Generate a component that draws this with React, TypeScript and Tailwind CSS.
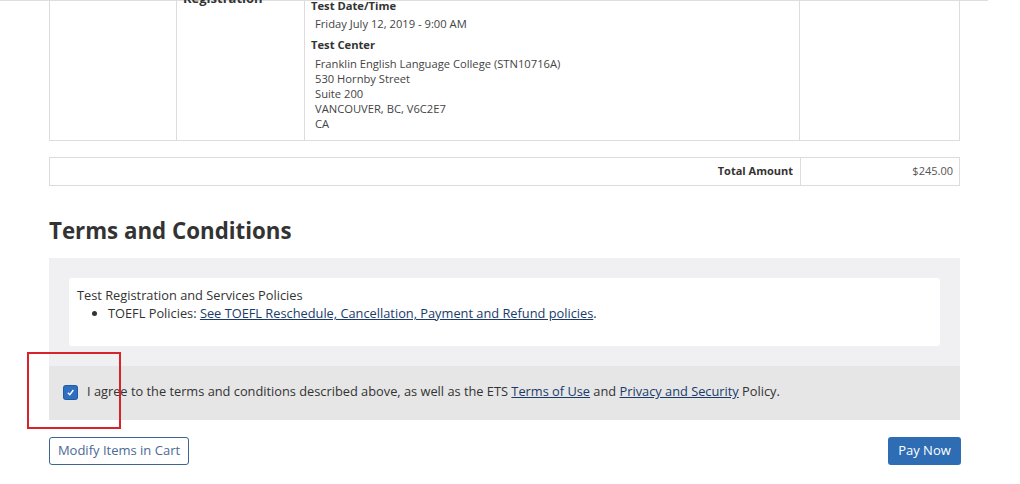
import React from "react";

export default function App() {
  return (
    <div
      className="relative h-[484px] w-[1020px] overflow-hidden bg-white text-[#333]"
      style={{ fontFamily: '"Open Sans", Arial, sans-serif' }}
    >
      <div className="h-px w-[988px] bg-[#dedede]" />
      <div className="-mt-[38px] pl-[49px] w-[960px]">
        {/* item row */}
        <div className="flex border border-[#dcdcdc] border-t-0">
          <div className="w-[127px] border-r border-[#dcdcdc]" />
          <div className="w-[128px] border-r border-[#dcdcdc] pl-[6px] pt-[8px] text-[13px] font-bold leading-[18px] text-[#333]">
            <div>TOEFL iBT Test</div>
            <div>Registration</div>
          </div>
          <div className="w-[495px] border-r border-[#dcdcdc] pl-[6px] pt-[35px] pb-[9px] text-[11.2px]">
            <div className="font-bold leading-[16px]">Test Date/Time</div>
            <div className="mt-[2px] pl-[4px] leading-[16px] text-[#444]">Friday July 12, 2019 - 9:00 AM</div>
            <div className="mt-[5px] font-bold leading-[16px]">Test Center</div>
            <div className="mt-[3px] pl-[4px] leading-[15px] text-[#444]">
              <div>Franklin English Language College (STN10716A)</div>
              <div>530 Hornby Street</div>
              <div>Suite 200</div>
              <div>VANCOUVER, BC, V6C2E7</div>
              <div>CA</div>
            </div>
          </div>
          <div className="flex-1" />
        </div>

        {/* total row */}
        <div className="mt-[16px] flex h-[29px] border border-[#dcdcdc] text-[11px]">
          <div className="flex w-[751px] items-center justify-end border-r border-[#dcdcdc] pr-[7px] font-bold text-[#333]">
            Total Amount
          </div>
          <div className="flex flex-1 items-center justify-end pr-[6px] text-[#555]">$245.00</div>
        </div>

        <h2 className="mt-[30px] text-[22.3px] font-bold leading-[30px] text-[#333]">Terms and Conditions</h2>

        <div className="mt-[12px] w-[911px]">
          <div className="bg-[#f0f0f2] px-[20px] pt-[20px] pb-[20px]">
            <div className="h-[68px] rounded-[3px] bg-white pl-[8px] pt-[8px] text-[12.8px] leading-[18px] text-[#333]">
              <div>Test Registration and Services Policies</div>
              <ul className="list-disc pl-[31px]">
                <li>
                  TOEFL Policies:{" "}
                  <a href="#" className="text-[#1a3b6b] underline">
                    See TOEFL Reschedule, Cancellation, Payment and Refund policies
                  </a>
                  .
                </li>
              </ul>
            </div>
          </div>
          <div className="flex h-[54px] items-center bg-[#e6e6e6] pb-[2px] pl-[15px] text-[12.8px] text-[#333]">
            <span className="flex h-[13px] w-[13px] items-center justify-center rounded-[2px] bg-[#2f6fc0] ring-1 ring-[#1f5aa5]">
              <svg width="9" height="9" viewBox="0 0 10 10">
                <path d="M2 5.2 L4.2 7.5 L8.2 2.2" fill="none" stroke="white" strokeWidth="1.5" />
              </svg>
            </span>
            <span className="ml-[10px]">
              I agree to the terms and conditions described above, as well as the ETS{" "}
              <a href="#" className="text-[#1a3b6b] underline">Terms of Use</a> and{" "}
              <a href="#" className="text-[#1a3b6b] underline">Privacy and Security</a> Policy.
            </span>
          </div>
        </div>

        <div className="mt-[17px] flex w-[912px] items-center justify-between">
          <button className="h-[28px] w-[140px] rounded-[3px] border border-[#3d6591] bg-white text-[13px] text-[#4c6a95]">
            Modify Items in Cart
          </button>
          <button className="h-[28px] w-[73px] rounded-[3px] bg-[#2e6db4] text-[13px] text-white">
            Pay Now
          </button>
        </div>
      </div>

      <div className="absolute left-[27px] top-[352px] h-[77px] w-[94px] border-2 border-[#d8232a]" />
    </div>
  );
}
